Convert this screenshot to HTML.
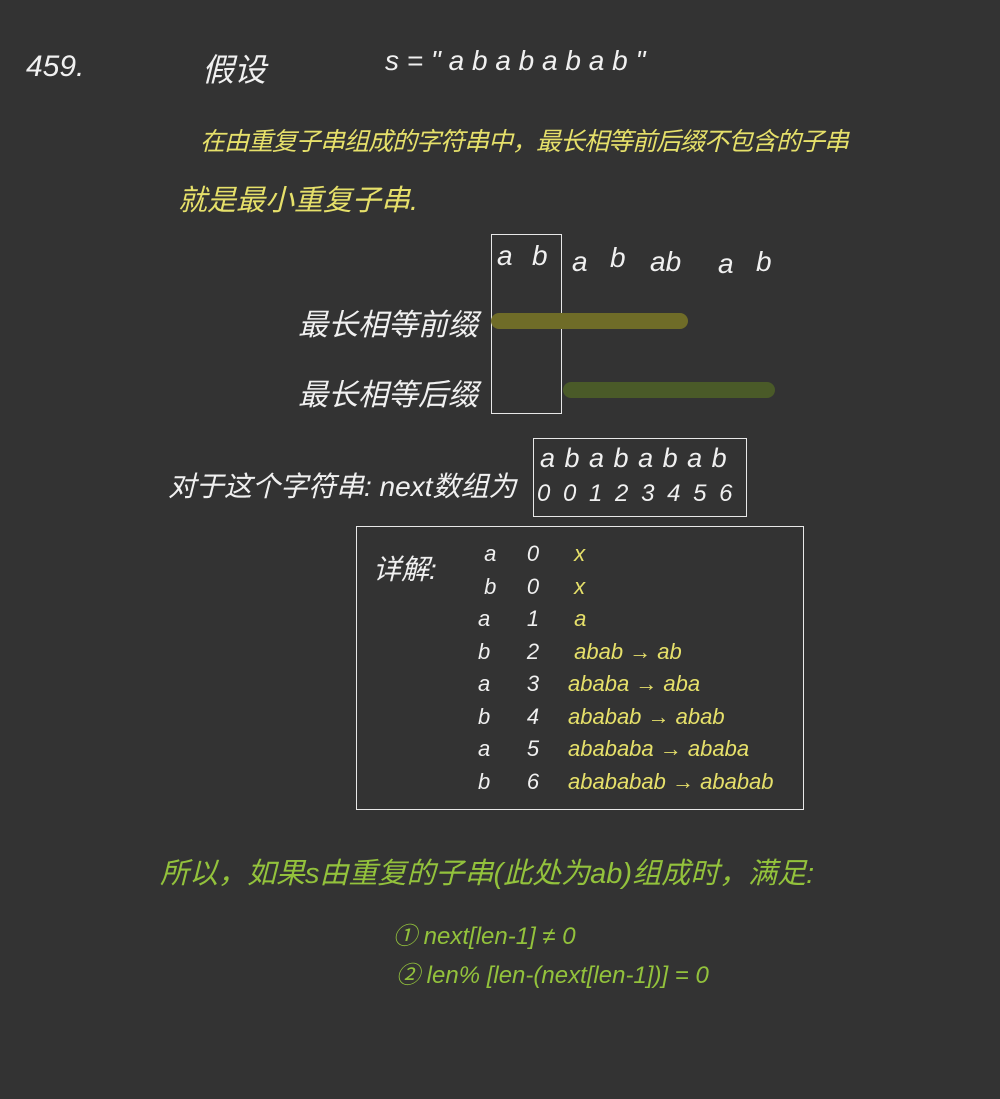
<!DOCTYPE html>
<html><head><meta charset="utf-8"><style>
body{margin:0;width:1000px;height:1099px;background:#333333;position:relative;overflow:hidden;font-family:"Liberation Sans","Noto Sans CJK SC",sans-serif;}
.t{position:absolute;white-space:nowrap;color:#f0f0f0;font-style:italic;}
.y{color:#e6e06a;}
.g{color:#93c23c;}
.box{position:absolute;border:1.5px solid #e8e8e8;}
.bar{position:absolute;height:16px;border-radius:8px;}
</style></head><body>
<div class="t" style="left:26px;top:50px;font-size:30px">459.</div>
<div class="t" style="left:202px;top:45px;font-size:32px">假设</div>
<div class="t" style="left:385px;top:45px;font-size:28px">s = " a b a b a b a b "</div>
<div class="t y" style="left:200px;top:122px;font-size:25px;letter-spacing:-1px">在由重复子串组成的字符串中，最长相等前后缀不包含的子串</div>
<div class="t y" style="left:178px;top:177px;font-size:29px">就是最小重复子串.</div>

<div class="box" style="left:491px;top:234px;width:69px;height:178px"></div>
<div class="t" style="left:497px;top:240px;font-size:28px">a</div>
<div class="t" style="left:532px;top:240px;font-size:28px">b</div>
<div class="t" style="left:572px;top:246px;font-size:28px">a</div>
<div class="t" style="left:610px;top:242px;font-size:28px">b</div>
<div class="t" style="left:650px;top:246px;font-size:28px">ab</div>
<div class="t" style="left:718px;top:248px;font-size:28px">a</div>
<div class="t" style="left:756px;top:246px;font-size:28px">b</div>
<div class="bar" style="left:491px;top:313px;width:197px;background:#6f6c28"></div>
<div class="bar" style="left:563px;top:382px;width:212px;background:#4a5a28"></div>
<div class="t" style="left:298px;top:300px;font-size:30px">最长相等前缀</div>
<div class="t" style="left:298px;top:370px;font-size:30px">最长相等后缀</div>

<div class="t" style="left:168px;top:465px;font-size:28px">对于这个字符串: next数组为</div>
<div class="box" style="left:533px;top:438px;width:212px;height:77px"></div>
<div class="t" style="left:540px;top:443px;font-size:27px;letter-spacing:1px">a b a b a b a b</div>
<div class="t" style="left:537px;top:480px;font-size:24px;letter-spacing:3px">0 0 1 2 3 4 5 6</div>

<div class="box" style="left:356px;top:526px;width:446px;height:282px"></div>
<div class="t" style="left:373px;top:548px;font-size:28px">详解:</div>
<div class="t" style="left:478px;top:538px;font-size:22px;line-height:32.5px">&nbsp;a&nbsp;&nbsp;&nbsp;&nbsp; 0<br>&nbsp;b&nbsp;&nbsp;&nbsp;&nbsp; 0<br>a&nbsp;&nbsp;&nbsp;&nbsp;&nbsp; 1<br>b&nbsp;&nbsp;&nbsp;&nbsp;&nbsp; 2<br>a&nbsp;&nbsp;&nbsp;&nbsp;&nbsp; 3<br>b&nbsp;&nbsp;&nbsp;&nbsp;&nbsp; 4<br>a&nbsp;&nbsp;&nbsp;&nbsp;&nbsp; 5<br>b&nbsp;&nbsp;&nbsp;&nbsp;&nbsp; 6</div>
<div class="t y" style="left:568px;top:538px;font-size:22px;line-height:32.5px">&nbsp;x<br>&nbsp;x<br>&nbsp;a<br>&nbsp;abab → ab<br>ababa → aba<br>ababab → abab<br>abababa → ababa<br>abababab → ababab</div>

<div class="t g" style="left:160px;top:850px;font-size:29px">所以，如果s由重复的子串(此处为ab)组成时，满足:</div>
<div class="t g" style="left:393px;top:916px;font-size:24px">① next[len-1] ≠ 0</div>
<div class="t g" style="left:396px;top:955px;font-size:24px">② len% [len-(next[len-1])] = 0</div>
</body></html>
